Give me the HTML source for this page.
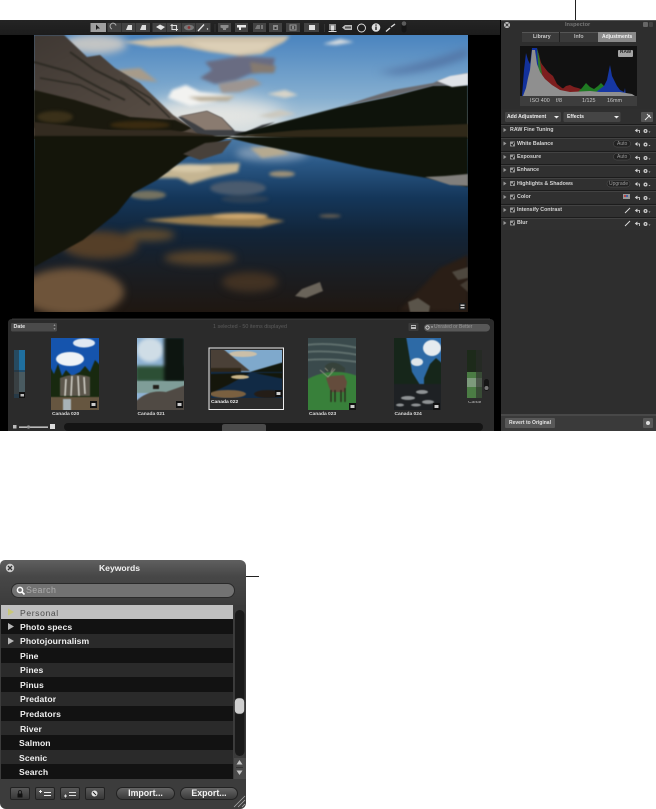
<!DOCTYPE html>
<html><head><meta charset="utf-8"><style>
html,body{margin:0;padding:0;background:#fff}
body{width:656px;height:809px;position:relative;overflow:hidden;font-family:"Liberation Sans",sans-serif;filter:blur(.3px)}
.a{position:absolute}
.t{position:absolute;white-space:nowrap;line-height:1}
.irow{position:absolute;left:501px;width:155px;height:12.4px;border-top:1px solid #1c1c1c;box-shadow:inset 0 1px 0 #424242;background:#303030}
.ilab{position:absolute;font-size:5.3px;font-weight:bold;color:#d4d4d4;white-space:nowrap;line-height:1}
.kr{position:absolute;left:1px;width:232px;height:13.75px;padding-top:.8px;color:#f0f0f0;font-size:8.6px;font-weight:bold;line-height:14.5px;text-indent:19px;letter-spacing:.1px}
.d{background:#121212}.l{background:#2a2a2a}
.kb{position:absolute;top:787px;height:13px;box-sizing:border-box;border:1px solid #222;border-radius:2px;background:linear-gradient(#5a5a5a,#383838);width:20px}
.pill{position:absolute;top:787px;height:13px;box-sizing:border-box;border:1px solid #222;border-radius:7px;background:linear-gradient(#666,#3a3a3a);color:#f2f2f2;font-size:8.8px;font-weight:bold;text-align:center;line-height:11px}
</style></head><body>
<div class="a" style="left:575px;top:0;width:1px;height:20px;background:#222"></div>
<div class="a" style="left:0;top:20px;width:501px;height:411px;background:#000"></div>
<div class="a" style="left:0;top:20px;width:500px;height:15px;background:linear-gradient(#242424,#1c1c1c)"></div>

<svg class="a" style="left:0;top:0" width="656" height="440" viewBox="0 0 656 440">
<defs>
<linearGradient id="sky" x1="0" y1="0" x2="0" y2="1"><stop offset="0" stop-color="#4a84bf"/><stop offset=".6" stop-color="#86afd0"/><stop offset="1" stop-color="#d6dedf"/></linearGradient>
<linearGradient id="wat" x1="0" y1="0" x2="0" y2="1"><stop offset="0" stop-color="#4c7aa6"/><stop offset=".14" stop-color="#2a5886"/><stop offset=".34" stop-color="#143659"/><stop offset=".55" stop-color="#122438"/><stop offset=".75" stop-color="#1a1e24"/><stop offset="1" stop-color="#1f1711"/></linearGradient>
<linearGradient id="mtn" x1="0" y1="0" x2="1" y2="1"><stop offset="0" stop-color="#3f3833"/><stop offset="1" stop-color="#5f5349"/></linearGradient>
<filter id="b05" x="-10%" y="-10%" width="120%" height="120%" color-interpolation-filters="sRGB"><feGaussianBlur stdDeviation=".5"/></filter>
<filter id="b1" color-interpolation-filters="sRGB"><feGaussianBlur stdDeviation=".8"/></filter>
<filter id="b2" x="-50%" y="-100%" width="200%" height="300%" color-interpolation-filters="sRGB"><feGaussianBlur stdDeviation="1.6"/></filter>
<filter id="b4" x="-50%" y="-100%" width="200%" height="300%" color-interpolation-filters="sRGB"><feGaussianBlur stdDeviation="4"/></filter>
<filter id="b8" x="-50%" y="-100%" width="200%" height="300%" color-interpolation-filters="sRGB"><feGaussianBlur stdDeviation="9"/></filter>
<clipPath id="ph"><rect x="34" y="35" width="434" height="277"/></clipPath>
<clipPath id="t20"><rect x="51" y="338" width="48" height="72"/></clipPath>
<clipPath id="t21"><rect x="137" y="338" width="47" height="72"/></clipPath>
<clipPath id="t22"><rect x="211" y="350" width="71" height="48"/></clipPath>
<clipPath id="t23"><rect x="308" y="338" width="48" height="72"/></clipPath>
<clipPath id="t24"><rect x="394" y="338" width="47" height="72"/></clipPath>
</defs>
<!-- main photo -->
<g clip-path="url(#ph)">
<rect x="34" y="35" width="434" height="105" fill="url(#sky)"/>
<ellipse cx="215" cy="116" rx="70" ry="18" fill="#e4e5e2" filter="url(#b8)"/>
<ellipse cx="95" cy="44" rx="32" ry="10" fill="#c2c4c4" filter="url(#b4)"/>
<path d="M377 72Q420 66 468 48V56Q430 72 395 74Z" fill="#5273a3" filter="url(#b4)"/>
<g filter="url(#b2)">
<path d="M123 42Q160 37 200 36H290L284 42 272 48 262 54 240 56 210 52 180 46 150 47Z" fill="#cfc2aa"/>
<path d="M190 42H275L262 50 235 54 205 48Z" fill="#dccfb6"/>
<path d="M205 62L240 56 275 58 272 72 250 74 236 80 215 84 200 78 212 70Z" fill="#696c82"/>
<path d="M250 62L276 66 274 73 252 73Z" fill="#857a70"/>
<path d="M218 84L252 78 262 84 240 92 222 93Z" fill="#9d9591"/>
<path d="M117 70L140 68 158 82 140 80 122 76Z" fill="#a79b8a"/>
<path d="M172 90L186 85 200 92 235 96 215 102 190 106 168 98Z" fill="#f2f2f0"/>
<path d="M188 97L235 96 228 101 200 101Z" fill="#b8ad98"/>
<path d="M267 94L285 90 298 95 285 98Z" fill="#d8d4c8"/>
<path d="M323 44L340 39 354 42 336 45Z" fill="#d6dbde"/>
<path d="M258 116L280 110 296 114 272 118Z" fill="#cbc8be"/>
</g>
<path d="M34 35H64L87 57 100 55 115 68 140 83 173 115 192 128 213 135 215 138 34 142Z" fill="url(#mtn)" filter="url(#b1)"/>
<g filter="url(#b1)" fill="none" stroke="#2e2b24">
<path d="M34 62L70 72 100 88 125 100" stroke-width="2"/><path d="M70 52L95 70 125 85 150 105" stroke-width="2"/><path d="M40 78L80 85 110 100" stroke-width="1.5"/><path d="M120 80L150 98 170 118" stroke-width="1.5"/>
</g>
<path d="M34 90L75 100 130 117 175 120 192 128 180 133 34 128Z" fill="#1a190e" filter="url(#b1)"/>
<ellipse cx="140" cy="125" rx="30" ry="4" fill="#3a2b10" filter="url(#b2)"/>
<ellipse cx="55" cy="117" rx="18" ry="6" fill="#3a3019" filter="url(#b2)"/>
<path d="M178 117L192 114 207 111 222 118 235 131 246 132 262 125 275 122 245 136 200 136Z" fill="#3e4044" filter="url(#b1)"/>
<path d="M180 116L192 114 207 111 222 118 233 130 205 130 195 124Z" fill="#8a7b70" filter="url(#b1)"/>
<path d="M233 135L340 107 393 96 433 85 468 85V137Z" fill="#0e130b" filter="url(#b1)"/>
<path d="M340 107L367 98 393 90 433 83 440 80 468 73V85L433 86 393 96Z" fill="#6a6b70" filter="url(#b1)"/>
<path d="M437 81L450 76 468 73V85L452 87Z" fill="#dfe3e8" filter="url(#b1)"/>
<path d="M34 122L110 130 170 130 218 136 190 140 100 147 34 157Z" fill="#332b20" filter="url(#b1)"/>
<path d="M233 136L300 130 468 124V144L330 140Z" fill="#302919" filter="url(#b1)"/>
<rect x="34" y="139" width="434" height="173" fill="url(#wat)"/>
<ellipse cx="272" cy="153" rx="36" ry="8" fill="#7d98b3" filter="url(#b4)"/>
<g filter="url(#b4)">
<ellipse cx="72" cy="292" rx="52" ry="24" fill="#6e543a"/>
<ellipse cx="100" cy="245" rx="38" ry="14" fill="#553f28"/>
<ellipse cx="200" cy="258" rx="36" ry="7" fill="#57432b"/>
<ellipse cx="250" cy="282" rx="28" ry="10" fill="#423223"/>
<ellipse cx="150" cy="235" rx="25" ry="6" fill="#5e4a2e"/>
</g>
<g filter="url(#b2)">
<path d="M143 220L190 216 240 213 285 221 260 227 215 226 180 224Z" fill="#9c7f50"/>
<ellipse cx="240" cy="216" rx="28" ry="3" fill="#cfa86e"/>
<path d="M153 178L180 165 240 163 238 172 210 178 190 184 178 178Z" fill="#c5b592"/>
<ellipse cx="190" cy="168" rx="22" ry="4" fill="#d8c9a8"/>
<path d="M250 148L275 146 290 154 262 158Z" fill="#b6aa90"/>
<ellipse cx="282" cy="174" rx="13" ry="3" fill="#a09278"/>
<ellipse cx="238" cy="188" rx="28" ry="7" fill="#4a5b6e"/>
<ellipse cx="245" cy="199" rx="24" ry="4" fill="#2c4157"/>
<ellipse cx="148" cy="195" rx="18" ry="4.5" fill="#757260"/>
<ellipse cx="330" cy="216" rx="11" ry="1.6" fill="#6d6252"/>
</g>
<path d="M34 136H232L187 157 157 180 133 193 117 213 83 240 34 267Z" fill="#14150a" filter="url(#b1)"/>
<path d="M183 154L205 143 232 140 222 153 200 160Z" fill="#48413a" filter="url(#b1)"/>
<path d="M225 137H468V187L427 178 367 168 317 157 250 143Z" fill="#10140a" filter="url(#b1)"/>
<path d="M425 177L450 185 468 186V174L445 176Z" fill="#817f7c" filter="url(#b1)"/>
<path d="M400 310L440 268 468 255V312Z" fill="#2a1e16" filter="url(#b2)"/>
<g filter="url(#b1)">
<path d="M295 296L302 289 320 282 323 291 306 298Z" fill="#6a645a"/>
<path d="M408 302L418 298 430 306 429 312H410Z" fill="#5a544a"/>
<path d="M452 272L468 267V278L458 280Z" fill="#4e483f"/>
<path d="M460 285L468 280V292Z" fill="#443c33"/>
</g>
</g>
<rect x="459" y="303" width="7" height="7" fill="#1d1d1d"/><rect x="460.5" y="304.5" width="4" height="4" fill="#ccc"/><rect x="460.5" y="306" width="4" height="1" fill="#222"/>

<!-- toolbar -->
<g>
<rect x="90.5" y="23" width="15.5" height="9" fill="#a0a0a0"/>
<path d="M96 24.5V30L97.5 28.5H100Z" fill="#1c1c1c"/>
<rect x="107.5" y="23" width="14" height="9" fill="#424242"/><rect x="122" y="23" width="13.5" height="9" fill="#424242"/><rect x="136" y="23" width="14" height="9" fill="#424242"/>
<rect x="152.5" y="23" width="14" height="9" fill="#424242"/><rect x="167" y="23" width="14" height="9" fill="#424242"/><rect x="181.5" y="23" width="14" height="9" fill="#424242"/><rect x="196" y="23" width="14.5" height="9" fill="#424242"/>
<path d="M112 29a3 3 0 1 1 4 -3.5" stroke="#aaa" stroke-width="1" fill="none"/>
<path d="M126 30L128 25 132 25 132 30ZM140 30L142 25 146 25 146 30Z" fill="#ddd"/>
<path d="M156 27L160 24.5 165 27 161 30Z" fill="#e4e4e4"/>
<path d="M172 24V29.5H178M170.5 25.5H176.5V31" stroke="#ddd" stroke-width="1.1" fill="none"/>
<ellipse cx="189" cy="27.5" rx="5" ry="2.8" fill="#777"/><circle cx="189" cy="27.5" r="1.4" fill="#8e3535"/>
<path d="M198 31L204 24.5" stroke="#e8e8e8" stroke-width="1.3"/><circle cx="207.5" cy="29" r=".7" fill="#ddd"/>
<rect x="214.5" y="24" width="1" height="8" fill="#333"/>
<rect x="218" y="23" width="13" height="9" fill="#424242"/><path d="M220.5 25H228.5V27.5L226 28.5V30H223V28.5L220.5 27.5Z" fill="#8c8c8c"/>
<rect x="235" y="23" width="13" height="9" fill="#424242"/><path d="M237 25H246V27.5H241V30H239V27.5H237Z" fill="#e8e8e8"/>
<rect x="253" y="23" width="13" height="9" fill="#424242"/><path d="M255 29L257 25H260V29ZM261 25H263V29H261Z" fill="#777"/>
<rect x="269" y="23" width="13" height="9" fill="#424242"/><rect x="273" y="25" width="5" height="5" fill="#888"/><rect x="274.5" y="27" width="2" height="2" fill="#333"/>
<rect x="286" y="23" width="14" height="9" fill="#424242"/><rect x="290" y="25" width="6" height="5" fill="none" stroke="#999"/><rect x="292.5" y="26" width="1" height="3" fill="#ccc"/>
<rect x="304" y="23" width="15" height="9" fill="#424242"/><rect x="309" y="25" width="6" height="5" fill="#e0e0e0"/>
<rect x="324" y="24" width="1" height="8" fill="#333"/>
<path d="M329 24H336V30H334V26H331V30H329Z" fill="#888"/><rect x="331" y="25.5" width="3" height="5" fill="#ddd"/><rect x="328.5" y="31" width="8" height="1" fill="#ddd"/>
<path d="M342 27.5L345 25H352V30H345Z" fill="#bbb"/><rect x="345" y="26.5" width="6" height="2" fill="#555"/>
<circle cx="361.5" cy="28" r="4" fill="none" stroke="#e2e2e2" stroke-width=".9"/>
<circle cx="376" cy="27.5" r="4.3" fill="#ddd"/><rect x="375.3" y="26.5" width="1.4" height="3.5" fill="#222"/><rect x="375.3" y="24.5" width="1.4" height="1.2" fill="#222"/>
<path d="M386 31.5L390 28M391 27L395 24" stroke="#ddd" stroke-width="1.4"/>
<rect x="401.5" y="21" width="5" height="11.5" rx="2.5" fill="#151515"/><circle cx="404" cy="23.5" r="2.3" fill="#5c5c5c"/>
</g>

<!-- filmstrip panel -->
<path d="M8 431V323Q8 319 12 319H490Q494 319 494 323V431Z" fill="#2b2b2b"/>
<path d="M12 319H490" stroke="#444" stroke-width=".8"/>
<rect x="11" y="323" width="46" height="8.5" rx="1.2" fill="#4a4a4a"/>
<path d="M53.5 325.5L54.5 324.5 55.5 325.5ZM53.5 328.5L54.5 329.5 55.5 328.5Z" fill="#ddd"/>
<rect x="408.5" y="323" width="10" height="8" rx="1" fill="#3b3b3b"/><rect x="411" y="325" width="5" height="4" fill="#bbb"/><rect x="411.5" y="326" width="4" height="1" fill="#333"/>
<rect x="424" y="324" width="66" height="7.5" rx="3.7" fill="#585858"/><circle cx="427.5" cy="327.5" r="1.7" fill="none" stroke="#ddd" stroke-width=".8"/><path d="M431 326.5H433L432 328Z" fill="#ddd"/>

<!-- thumb far left -->
<rect x="14" y="350" width="11" height="48" fill="#224c68"/>
<rect x="14" y="350" width="11" height="20" fill="#1f6f9f"/>
<rect x="14" y="372" width="11" height="22" fill="#495a60"/>
<rect x="14" y="350" width="5" height="48" fill="#2b2b2b" opacity=".55"/>
<rect x="19" y="392" width="6" height="6" fill="#111"/><rect x="20.5" y="394" width="3.5" height="2.5" fill="#bbb"/>
<!-- 020 -->
<g clip-path="url(#t20)"><g filter="url(#b05)">
<rect x="49" y="336" width="52" height="76" fill="#1554ad"/>
<ellipse cx="84" cy="343" rx="11" ry="4.5" fill="#dfe8f2"/>
<ellipse cx="70" cy="359" rx="14" ry="7" fill="#eef2f6"/>
<path d="M49 365L54 374 58 364 62 376 66 370 72 376 80 372 85 366 90 372 95 360 101 366V412H49Z" fill="#18290f"/>
<path d="M60 378Q75 372 90 377V396H60Z" fill="#5d574c"/>
<path d="M66 379L65 396M72 376L71 396M78 376L79 396M84 377L85 394" stroke="#cfcdc5" stroke-width="1.6"/>
<rect x="49" y="397" width="52" height="15" fill="#665640"/>
<rect x="63" y="399" width="8" height="13" fill="#a8b3b8"/>
</g></g>
<rect x="90" y="401" width="7" height="7" fill="#111"/><rect x="91.5" y="403" width="4" height="3" fill="#ccc"/>
<!-- 021 -->
<g clip-path="url(#t21)"><g filter="url(#b05)">
<rect x="135" y="336" width="51" height="76" fill="#8fb3d4"/>
<ellipse cx="150" cy="350" rx="13" ry="12" fill="#cfdde6" filter="url(#b2)"/>
<rect x="135" y="366" width="51" height="16" fill="#2c4f35" filter="url(#b2)"/>
<rect x="164" y="336" width="22" height="46" fill="#0d1510" filter="url(#b2)"/>
<rect x="135" y="381" width="51" height="12" fill="#7f9d98"/>
<path d="M135 402Q148 389 166 392L186 385V412H135Z" fill="#504a44"/>
<rect x="153" y="385" width="6" height="4" fill="#221f1a"/>
</g></g>
<rect x="176" y="401" width="7" height="7" fill="#111"/><rect x="177.5" y="403" width="4" height="3" fill="#ccc"/>
<!-- 022 -->
<rect x="209" y="348" width="74.5" height="61.5" fill="#2b2b2b" stroke="#eee" stroke-width="1"/>
<g clip-path="url(#t22)"><g filter="url(#b05)">
<rect x="209" y="348" width="75" height="26" fill="#7fa9cc"/>
<ellipse cx="243" cy="354" rx="14" ry="3" fill="#cbbfa8"/>
<path d="M209 348H222L250 371H209Z" fill="#4a4037"/>
<path d="M250 372L284 362V372Z" fill="#12170d"/>
<rect x="209" y="368" width="32" height="4" fill="#2f2618"/>
<rect x="209" y="372" width="75" height="28" fill="#112a45"/>
<path d="M209 374L250 373 228 385 209 394Z" fill="#15160b"/>
<path d="M284 373H255L284 379Z" fill="#13170b"/>
<ellipse cx="240" cy="377" rx="9" ry="2" fill="#c8b488"/>
<ellipse cx="228" cy="394" rx="18" ry="4" fill="#7a6040"/>
<ellipse cx="268" cy="394" rx="14" ry="4" fill="#241d17"/>
</g></g>
<rect x="275" y="390" width="7" height="7" fill="#111"/><rect x="276.5" y="392" width="4" height="3" fill="#ccc"/>
<!-- 023 -->
<g clip-path="url(#t23)"><g filter="url(#b05)">
<rect x="306" y="336" width="52" height="76" fill="#3a4a4c"/>
<path d="M306 345Q330 342 358 348M306 352Q330 350 358 355M306 360Q330 358 358 362" stroke="#5e6e6c" stroke-width="2" fill="none"/>
<path d="M306 380Q330 366 358 376V412H306Z" fill="#38803a"/>
<path d="M325 366Q333 358 345 368V372H325Z" fill="#36423a"/>
<path d="M326 378L331 376 344 375 347 382 345 392H331L329 387Z" fill="#644c3c"/>
<path d="M331 390V402M335 390V402M341 390V402M345 388V402" stroke="#2a2019" stroke-width="1.2"/>
<path d="M320 370L328 377 335 369M328 371L325 368M331 372L333 368" stroke="#a9a193" stroke-width=".7" fill="none"/>
</g></g>
<rect x="349" y="403" width="7" height="7" fill="#111"/><rect x="350.5" y="405" width="4" height="3" fill="#ccc"/>
<!-- 024 -->
<g clip-path="url(#t24)"><g filter="url(#b05)">
<rect x="392" y="336" width="51" height="76" fill="#2d6aa6"/>
<ellipse cx="432" cy="348" rx="9" ry="8" fill="#e5ebef"/>
<ellipse cx="417" cy="362" rx="6" ry="4" fill="#dfe6ea"/>
<path d="M392 336H406L412 372 420 385H392Z" fill="#16261a"/>
<path d="M424 378L430 364 436 358 443 364V388H424Z" fill="#16261a"/>
<rect x="392" y="384" width="51" height="28" fill="#1e2124"/>
<g fill="#8f9395"><ellipse cx="408" cy="398" rx="7" ry="2"/><ellipse cx="422" cy="392" rx="6" ry="2"/><ellipse cx="428" cy="402" rx="6" ry="2"/><ellipse cx="400" cy="405" rx="4" ry="1.5"/><ellipse cx="416" cy="405" rx="5" ry="1.5"/></g>
</g></g>
<rect x="433" y="403" width="7" height="7" fill="#111"/><rect x="434.5" y="405" width="4" height="3" fill="#ccc"/>
<!-- far right -->
<rect x="467" y="350" width="15" height="48" fill="#1d2a1a"/><rect x="467" y="372" width="15" height="26" fill="#4b7c44"/><rect x="467" y="378" width="15" height="9" fill="#7d9a7c"/>
<rect x="476" y="350" width="6" height="48" fill="#2b2b2b" opacity=".6"/>
<rect x="484" y="379" width="5" height="12" rx="2.5" fill="#151515"/><circle cx="486.5" cy="388" r="2" fill="#777"/>
<!-- bottom slider & scroller -->
<rect x="13" y="425" width="3.5" height="3.5" fill="#bbb"/>
<rect x="19" y="426.5" width="29" height="1.3" fill="#ddd"/><circle cx="28.5" cy="427" r="1.6" fill="#999"/>
<rect x="50" y="424" width="5" height="5" fill="#ddd"/>
<rect x="64" y="423" width="419" height="8" rx="4" fill="#141414"/>
<path d="M222 431V426Q222 424 225 424H263Q266 424 266 426V431Z" fill="#4b4b4b"/>

<!-- inspector -->
<rect x="501" y="20" width="155" height="411" fill="#2e2e2e"/>
<rect x="501" y="20" width="155" height="1" fill="#555"/>
<circle cx="507" cy="25" r="3" fill="#c8c8c8"/><path d="M505.5 23.5L508.5 26.5M508.5 23.5L505.5 26.5" stroke="#333" stroke-width=".9"/>
<rect x="643" y="22" width="5" height="5" rx="1" fill="#666"/><rect x="649" y="22" width="4" height="5" rx="1" fill="#444"/>
<rect x="522" y="32" width="76" height="10" fill="#3a3a3a"/><rect x="522" y="32" width="76" height="1" fill="#555"/><rect x="559" y="32" width="1" height="10" fill="#222"/>
<rect x="598" y="32" width="38" height="10" fill="#8a8a8a"/>
<rect x="520" y="46" width="117" height="51" fill="#111"/>
<rect x="520" y="96" width="117" height="10" fill="#3d3d3d"/>
<!-- histogram -->
<path d="M522 96L524 70 526 53 528 60 530 64 532 48 537 48 540 62 544 72 550 84 560 92 600 93Z" fill="#12319c"/>
<path d="M537 48L540 60 543 67 547 72 553 78 558 86 564 90H540Z" fill="#2b7a2c"/>
<path d="M538 50L541 63 548 72 553 76 557 84 562 88 568 90 568 92 545 92Z" fill="#7d1e1e"/>
<path d="M560 91L566 86 570 85 574 87 578 88 584 90 590 92 575 93Z" fill="#7d1e1e"/>
<path d="M578 92L582 88 586 83 590 87 594 89 598 86 601 83 604 86 612 90 600 93Z" fill="#1f7a22"/>
<path d="M596 92L604 86 607 80 610 65 612 76 614 80 617 86 620 90 624 92 625 88 626 96H596Z" fill="#1637a3"/>
<path d="M523 96L526 88 528 78 530 70 532 50 535 50 537 64 540 72 545 79 552 85 560 90 570 92 590 91 600 92 620 92 632 94 635 96Z" fill="#8f8f8f"/>
<rect x="618" y="50" width="15" height="7" rx="1" fill="#a5a5a5"/>
<!-- popup controls -->
<rect x="501" y="109" width="155" height="15" fill="#2f2f2f"/>
<rect x="505" y="112" width="56" height="10" rx="1.2" fill="#454545"/><path d="M554 116H559L556.5 118.5Z" fill="#eee"/>
<rect x="563.5" y="112" width="57" height="10" rx="1.2" fill="#454545"/><path d="M614 116H619L616.5 118.5Z" fill="#eee"/>
<rect x="641" y="112" width="12" height="10" rx="1" fill="#555"/><path d="M645 120L650 115M647 114L651 118" stroke="#eee" stroke-width=".9"/>
<rect x="501" y="414" width="155" height="17" fill="#3a3a3a"/><rect x="501" y="414.5" width="155" height="1" fill="#555"/>
<rect x="505" y="418" width="50" height="10" rx="1" fill="#585858"/>
<rect x="643" y="418" width="10" height="10" rx="1" fill="#585858"/><circle cx="648" cy="423" r="2" fill="#ddd"/>
</svg>

<!-- inspector text -->
<div class="t" style="left:565px;top:22.5px;font-size:5.6px;font-weight:bold;color:#777">Inspector</div>
<div class="t" style="left:533px;top:34.5px;font-size:5.2px;font-weight:bold;color:#ccc">Library</div>
<div class="t" style="left:574px;top:34.5px;font-size:5.2px;font-weight:bold;color:#bbb">Info</div>
<div class="t" style="left:602px;top:34.5px;font-size:5px;font-weight:bold;color:#f2f2f2">Adjustments</div>
<div class="t" style="left:620px;top:51px;font-size:4.8px;font-weight:bold;color:#222">RAW</div>
<div class="t" style="left:530px;top:98.5px;font-size:5.4px;color:#c8c8c8">ISO 400</div>
<div class="t" style="left:556px;top:98.5px;font-size:5.4px;color:#c8c8c8">f/8</div>
<div class="t" style="left:582px;top:98.5px;font-size:5.4px;color:#c8c8c8">1/125</div>
<div class="t" style="left:607px;top:98.5px;font-size:5.4px;color:#c8c8c8">16mm</div>
<div class="ilab" style="left:507px;top:115px;color:#eee;font-size:5.1px">Add Adjustment</div>
<div class="ilab" style="left:567px;top:115px;color:#eee;font-size:5.1px">Effects</div>
<div class="t" style="left:509px;top:420.5px;font-size:5px;font-weight:bold;color:#e2e2e2">Revert to Original</div>

<div class="irow" style="top:124px"></div><div class="irow" style="top:137px"></div><div class="irow" style="top:150.5px"></div><div class="irow" style="top:163.5px"></div><div class="irow" style="top:177px"></div><div class="irow" style="top:190px"></div><div class="irow" style="top:203.5px"></div><div class="irow" style="top:216.5px"></div>

<svg class="a" style="left:501px;top:120px" width="155" height="112" viewBox="501 120 155 112">
<defs><g id="tri"><path d="M0 0L3 2 0 4Z" fill="#999"/></g>
<g id="chk"><rect width="5" height="5" rx=".6" fill="#999"/><path d="M1 2.5L2.2 4 4.2 .8" stroke="#111" stroke-width=".9" fill="none"/></g>
<g id="end"><path d="M637.5 -1L635.5 .5 637.5 2M636 .5H639.5V3" stroke="#ddd" stroke-width=".8" fill="none"/><circle cx="645.5" cy="1" r="2" fill="#ccc"/><circle cx="645.5" cy="1" r=".7" fill="#333"/><path d="M648.5 1.5H650.5L649.5 2.7Z" fill="#bbb"/></g></defs>
<use href="#tri" x="503.5" y="128"/><use href="#end" y="130"/>
<use href="#tri" x="503.5" y="141.5"/><use href="#chk" x="510" y="141.5"/><use href="#end" y="143.5"/>
<use href="#tri" x="503.5" y="155"/><use href="#chk" x="510" y="154.5"/><use href="#end" y="157"/>
<use href="#tri" x="503.5" y="168"/><use href="#chk" x="510" y="167.5"/><use href="#end" y="170"/>
<use href="#tri" x="503.5" y="181.5"/><use href="#chk" x="510" y="181"/><use href="#end" y="183.5"/>
<use href="#tri" x="503.5" y="195"/><use href="#chk" x="510" y="194.5"/><use href="#end" y="197"/>
<use href="#tri" x="503.5" y="208"/><use href="#chk" x="510" y="207.5"/><use href="#end" y="210"/>
<use href="#tri" x="503.5" y="221"/><use href="#chk" x="510" y="220.5"/><use href="#end" y="223"/>
<rect x="613.5" y="140.5" width="17" height="6.5" rx="3.2" fill="#222" stroke="#555" stroke-width=".5"/>
<rect x="613.5" y="153.5" width="17" height="6.5" rx="3.2" fill="#222" stroke="#555" stroke-width=".5"/>
<rect x="607" y="180.5" width="23" height="6.5" rx="3.2" fill="#222" stroke="#555" stroke-width=".5"/>
<rect x="623" y="194" width="7" height="5" fill="#999"/><rect x="624" y="195" width="2" height="2" fill="#b44"/><rect x="626" y="195" width="2" height="2" fill="#46a"/>
<path d="M625 213L630 208M625 226L630 221" stroke="#ddd" stroke-width=".9"/>
</svg>
<div class="ilab" style="left:510px;top:128px">RAW Fine Tuning</div>
<div class="ilab" style="left:517px;top:141.5px">White Balance</div>
<div class="ilab" style="left:517px;top:155px">Exposure</div>
<div class="ilab" style="left:517px;top:168px">Enhance</div>
<div class="ilab" style="left:517px;top:181.5px">Highlights &amp; Shadows</div>
<div class="ilab" style="left:517px;top:195px">Color</div>
<div class="ilab" style="left:517px;top:208px">Intensify Contrast</div>
<div class="ilab" style="left:517px;top:221px">Blur</div>
<div class="t" style="left:617px;top:141.5px;font-size:5px;color:#999">Auto</div>
<div class="t" style="left:617px;top:154.5px;font-size:5px;color:#999">Auto</div>
<div class="t" style="left:609px;top:181.5px;font-size:5px;color:#999">Upgrade</div>

<!-- filmstrip text -->
<div class="t" style="left:13.5px;top:324.5px;font-size:5.4px;font-weight:bold;color:#e4e4e4">Date</div>
<div class="t" style="left:213px;top:324.5px;font-size:5.4px;color:#5c5c5c">1 selected - 50 items displayed</div>
<div class="t" style="left:434px;top:325px;font-size:5px;color:#999">Unrated or Better</div>
<div class="t" style="left:52px;top:412.5px;font-size:4.9px;font-weight:bold;color:#ddd">Canada 020</div>
<div class="t" style="left:137.5px;top:412.5px;font-size:4.9px;font-weight:bold;color:#ddd">Canada 021</div>
<div class="t" style="left:211px;top:400.5px;font-size:4.9px;font-weight:bold;color:#eee">Canada 022</div>
<div class="t" style="left:309px;top:412.5px;font-size:4.9px;font-weight:bold;color:#ddd">Canada 023</div>
<div class="t" style="left:394.5px;top:412.5px;font-size:4.9px;font-weight:bold;color:#ddd">Canada 024</div>
<div class="t" style="left:468px;top:400.5px;font-size:4.9px;font-weight:bold;color:#999;width:13px;overflow:hidden">Canada</div>

<!-- Keywords panel -->
<div class="a" style="left:246px;top:575.5px;width:13px;height:1px;background:#222"></div>
<div class="a" style="left:0;top:560px;width:246px;height:249px;border-radius:5px 6px 6px 6px;background:linear-gradient(#5f5f5f 0,#474747 16px,#3c3c3c 45px,#3c3c3c)"></div>
<svg class="a" style="left:0;top:560px" width="20" height="16" viewBox="0 0 20 16"><circle cx="10" cy="8" r="4.2" fill="#ccc"/><path d="M8 6L12 10M12 6L8 10" stroke="#333" stroke-width="1.3"/></svg>
<div class="t" style="left:0;width:239px;text-align:center;top:564px;font-size:8.6px;font-weight:bold;color:#f2f2f2">Keywords</div>
<div class="a" style="left:11px;top:583px;width:224px;height:15px;box-sizing:border-box;border:1px solid #2a2a2a;border-radius:8px;background:#727272"></div>
<svg class="a" style="left:15px;top:585px" width="12" height="11" viewBox="0 0 12 11"><circle cx="5" cy="5" r="2.6" fill="none" stroke="#fff" stroke-width="1.5"/><path d="M7 7L9.5 9.5" stroke="#fff" stroke-width="1.6"/></svg>
<div class="t" style="left:26px;top:586px;font-size:8.8px;color:#adadad;letter-spacing:.4px">Search</div>

<div class="kr" style="top:605px;height:13.2px;background:#c0c0c0;color:#4c4c4c;font-weight:normal;letter-spacing:.6px">Personal</div>
<div class="kr d" style="top:619px">Photo specs</div>
<div class="kr l" style="top:633.5px">Photojournalism</div>
<div class="kr d" style="top:648px">Pine</div>
<div class="kr l" style="top:662.6px">Pines</div>
<div class="kr d" style="top:677.1px">Pinus</div>
<div class="kr l" style="top:691.7px">Predator</div>
<div class="kr d" style="top:706.2px">Predators</div>
<div class="kr l" style="top:720.8px">River</div>
<div class="kr d" style="top:735.3px;text-indent:18px">Salmon</div>
<div class="kr l" style="top:749.9px;text-indent:18px">Scenic</div>
<div class="kr d" style="top:764.4px;height:14.2px;text-indent:18px">Search</div>

<svg class="a" style="left:0;top:605px" width="246" height="204" viewBox="0 605 246 204">
<path d="M8 608.5L14 612 8 615.5Z" fill="#c9c87a"/>
<path d="M8 623L14 626.5 8 630Z" fill="#b8b8b8"/>
<path d="M8 637.5L14 641 8 644.5Z" fill="#b8b8b8"/>
<rect x="234" y="605" width="12" height="174" fill="#3a3a3a"/>
<rect x="235" y="610" width="9.5" height="146" rx="4.7" fill="#1a1a1a"/>
<rect x="234.5" y="698" width="10" height="16" rx="4" fill="#cfcfcf" stroke="#333" stroke-width=".6"/>
<rect x="234" y="758" width="12" height="21" fill="#4a4a4a"/>
<path d="M239.5 760L236.5 764.5H242.5ZM239.5 775L236.5 770.5H242.5Z" fill="#c2c2c2"/>
<path d="M236 767.5H243" stroke="#333"/>
</svg>

<div class="kb" style="left:10px"></div>
<div class="kb" style="left:35px"></div>
<div class="kb" style="left:60px"></div>
<div class="kb" style="left:85px"></div>
<svg class="a" style="left:0;top:780px" width="246" height="29" viewBox="0 780 246 29">
<rect x="17.5" y="793.5" width="5" height="4" fill="#111"/><path d="M18.5 793.5V792a1.5 1.5 0 0 1 3 0V793.5" stroke="#111" fill="none" stroke-width=".8"/>
<path d="M39 791.5H42M40.5 790V793M44 792.5H51M44 795.5H51" stroke="#eee" stroke-width="1"/>
<path d="M64 796H67M65.5 794.5V797.5M69 792.5H76M69 795.5H76" stroke="#ddd" stroke-width="1"/>
<circle cx="94.5" cy="793.5" r="3" fill="#e4e4e4"/><path d="M93 792L96 795" stroke="#222" stroke-width="1"/>
<path d="M234 807L245 796M238 807L245 800M242 807L245 804" stroke="#aaa" stroke-width=".8"/>
</svg>
<div class="pill" style="left:116px;width:59px">Import...</div>
<div class="pill" style="left:180px;width:58px">Export...</div>
</body></html>
